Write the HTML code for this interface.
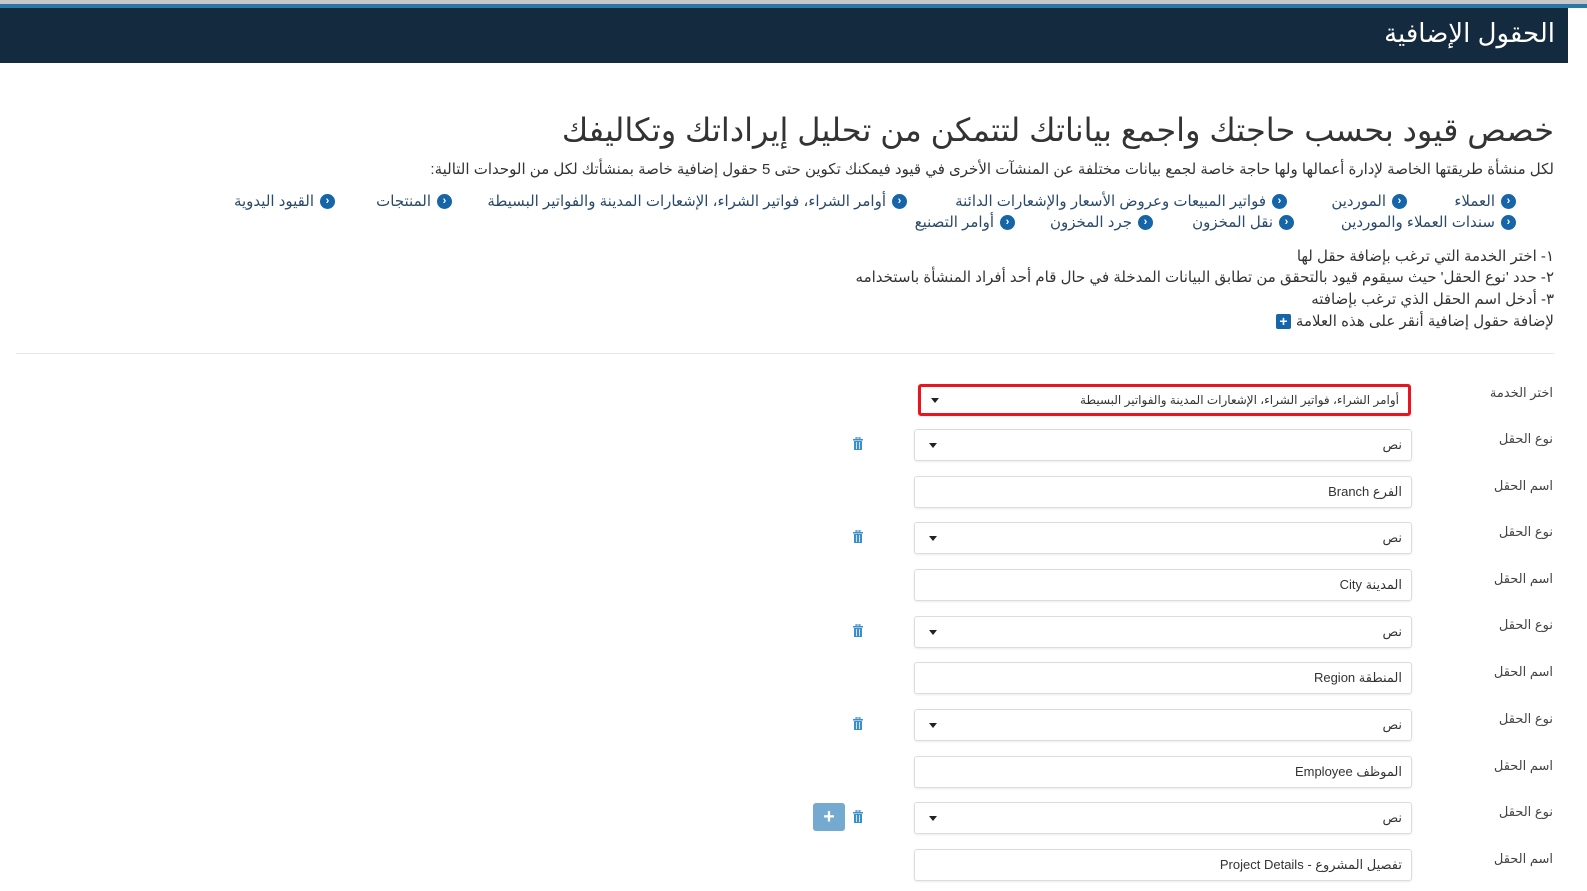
<!DOCTYPE html>
<html style="width:1587px;height:891px;overflow:hidden"><head><meta charset="utf-8"><style>
*{margin:0;padding:0;box-sizing:border-box}
html,body{width:1587px;height:891px;overflow:hidden;background:#fff}
body{font-family:"Liberation Sans","DejaVu Sans",sans-serif;color:#333}
#w{position:relative;width:1587px;height:891px;overflow:hidden;direction:rtl}
.a{position:absolute;white-space:nowrap}
.top1{left:0;top:0;width:1587px;height:4px;background:#c8c8c8}
.top2{left:0;top:4px;width:1587px;height:4px;background:#2878a8}
.bar{left:0;top:8px;width:1568px;height:55px;background:#142a3e}
.ttl{right:32px;top:18px;color:#fff;font-size:26px}
h1{position:absolute;right:33px;top:111px;font-size:32px;font-weight:normal;color:#333;white-space:nowrap}
.p{right:33px;font-size:15px;color:#333}
.lk{font-size:15px;color:#2a4a6b;display:flex;align-items:center;gap:6px}
.ic{width:15px;height:15px;border-radius:50%;background:#1565a8;color:#fff;font-size:11px;line-height:15px;text-align:center;font-weight:bold;display:inline-block}
.hr{left:16px;top:353px;width:1538px;height:1px;background:#e8e8e8}
.lb{right:34px;font-size:13px;color:#444}
.in{left:914px;width:498px;height:32px;border:1px solid #dcdcdc;border-radius:3px;box-shadow:0 1px 2px rgba(0,0,0,.08);font-size:13px;color:#333;padding-right:9px;line-height:30px;text-align:right}
.caret{position:absolute;left:14px;top:13px;width:0;height:0;border-left:4px solid transparent;border-right:4px solid transparent;border-top:5px solid #222}
.tr{left:852px;width:12px;height:13px}
.plus{left:813px;top:803px;width:32px;height:28px;background:#74aad0;border-radius:3px;color:#fff;font-size:20px;font-weight:bold;text-align:center;line-height:28px}
</style></head><body><div id="w">
<div class="a top1"></div><div class="a top2"></div><div class="a bar"></div>
<div class="a ttl">الحقول الإضافية</div>
<h1>خصص قيود بحسب حاجتك واجمع بياناتك لتتمكن من تحليل إيراداتك وتكاليفك</h1>
<div class="a p" style="top:160px">لكل منشأة طريقتها الخاصة لإدارة أعمالها ولها حاجة خاصة لجمع بيانات مختلفة عن المنشآت الأخرى في قيود فيمكنك تكوين حتى 5 حقول إضافية خاصة بمنشأتك لكل من الوحدات التالية:</div>

<div class="a lk" style="right:71px;top:192px"><span class="ic">‹</span>العملاء</div>
<div class="a lk" style="right:180px;top:192px"><span class="ic">‹</span>الموردين</div>
<div class="a lk" style="right:300px;top:192px"><span class="ic">‹</span>فواتير المبيعات وعروض الأسعار والإشعارات الدائنة</div>
<div class="a lk" style="right:680px;top:192px"><span class="ic">‹</span>أوامر الشراء، فواتير الشراء، الإشعارات المدينة والفواتير البسيطة</div>
<div class="a lk" style="right:1135px;top:192px"><span class="ic">‹</span>المنتجات</div>
<div class="a lk" style="right:1252px;top:192px"><span class="ic">‹</span>القيود اليدوية</div>
<div class="a lk" style="right:71px;top:213px"><span class="ic">‹</span>سندات العملاء والموردين</div>
<div class="a lk" style="right:293px;top:213px"><span class="ic">‹</span>نقل المخزون</div>
<div class="a lk" style="right:434px;top:213px"><span class="ic">‹</span>جرد المخزون</div>
<div class="a lk" style="right:572px;top:213px"><span class="ic">‹</span>أوامر التصنيع</div>

<div class="a p" style="top:247px">١- اختر الخدمة التي ترغب بإضافة حقل لها</div>
<div class="a p" style="top:268px">٢- حدد 'نوع الحقل' حيث سيقوم قيود بالتحقق من تطابق البيانات المدخلة في حال قام أحد أفراد المنشأة باستخدامه</div>
<div class="a p" style="top:290px">٣- أدخل اسم الحقل الذي ترغب بإضافته</div>
<div class="a p" style="top:312px;display:flex;align-items:center;gap:5px">لإضافة حقول إضافية أنقر على هذه العلامة <span style="display:inline-block;width:15px;height:15px;background:#1565a8;color:#fff;font-size:14px;line-height:15px;text-align:center;border-radius:2px;font-weight:bold">+</span></div>
<div class="a hr"></div>

<div class="a lb" style="top:385px">اختر الخدمة</div>
<div class="a in" style="top:384px;left:918px;width:493px;border:3px solid #e8141e;line-height:26px;font-size:12px">أوامر الشراء، فواتير الشراء، الإشعارات المدينة والفواتير البسيطة<span class="caret" style="left:10px;top:11px"></span></div>

<div class="a lb" style="top:431px">نوع الحقل</div>
<div class="a in" style="top:429px">نص<span class="caret"></span></div>
<svg class="a tr" style="top:437px" viewBox="0 0 12 13"><rect x="1" y="2" width="10" height="1.5" fill="#3d8fcc"/><rect x="4" y="0" width="4" height="2" fill="none" stroke="#3d8fcc"/><rect x="2" y="4" width="8" height="9" fill="#3d8fcc"/><rect x="4" y="5" width="1" height="7" fill="#cfe3f3"/><rect x="7" y="5" width="1" height="7" fill="#cfe3f3"/></svg>
<div class="a lb" style="top:478px">اسم الحقل</div>
<div class="a in" style="top:476px">الفرع Branch</div>

<div class="a lb" style="top:524px">نوع الحقل</div>
<div class="a in" style="top:522px">نص<span class="caret"></span></div>
<svg class="a tr" style="top:530px" viewBox="0 0 12 13"><rect x="1" y="2" width="10" height="1.5" fill="#3d8fcc"/><rect x="4" y="0" width="4" height="2" fill="none" stroke="#3d8fcc"/><rect x="2" y="4" width="8" height="9" fill="#3d8fcc"/><rect x="4" y="5" width="1" height="7" fill="#cfe3f3"/><rect x="7" y="5" width="1" height="7" fill="#cfe3f3"/></svg>
<div class="a lb" style="top:571px">اسم الحقل</div>
<div class="a in" style="top:569px">المدينة City</div>

<div class="a lb" style="top:617px">نوع الحقل</div>
<div class="a in" style="top:616px">نص<span class="caret"></span></div>
<svg class="a tr" style="top:624px" viewBox="0 0 12 13"><rect x="1" y="2" width="10" height="1.5" fill="#3d8fcc"/><rect x="4" y="0" width="4" height="2" fill="none" stroke="#3d8fcc"/><rect x="2" y="4" width="8" height="9" fill="#3d8fcc"/><rect x="4" y="5" width="1" height="7" fill="#cfe3f3"/><rect x="7" y="5" width="1" height="7" fill="#cfe3f3"/></svg>
<div class="a lb" style="top:664px">اسم الحقل</div>
<div class="a in" style="top:662px">المنطقة Region</div>

<div class="a lb" style="top:711px">نوع الحقل</div>
<div class="a in" style="top:709px">نص<span class="caret"></span></div>
<svg class="a tr" style="top:717px" viewBox="0 0 12 13"><rect x="1" y="2" width="10" height="1.5" fill="#3d8fcc"/><rect x="4" y="0" width="4" height="2" fill="none" stroke="#3d8fcc"/><rect x="2" y="4" width="8" height="9" fill="#3d8fcc"/><rect x="4" y="5" width="1" height="7" fill="#cfe3f3"/><rect x="7" y="5" width="1" height="7" fill="#cfe3f3"/></svg>
<div class="a lb" style="top:758px">اسم الحقل</div>
<div class="a in" style="top:756px">الموظف Employee</div>

<div class="a lb" style="top:804px">نوع الحقل</div>
<div class="a in" style="top:802px">نص<span class="caret"></span></div>
<svg class="a tr" style="top:810px" viewBox="0 0 12 13"><rect x="1" y="2" width="10" height="1.5" fill="#3d8fcc"/><rect x="4" y="0" width="4" height="2" fill="none" stroke="#3d8fcc"/><rect x="2" y="4" width="8" height="9" fill="#3d8fcc"/><rect x="4" y="5" width="1" height="7" fill="#cfe3f3"/><rect x="7" y="5" width="1" height="7" fill="#cfe3f3"/></svg>
<div class="a plus">+</div>
<div class="a lb" style="top:851px">اسم الحقل</div>
<div class="a in" style="top:849px">تفصيل المشروع - Project Details</div>
</div></body></html>
